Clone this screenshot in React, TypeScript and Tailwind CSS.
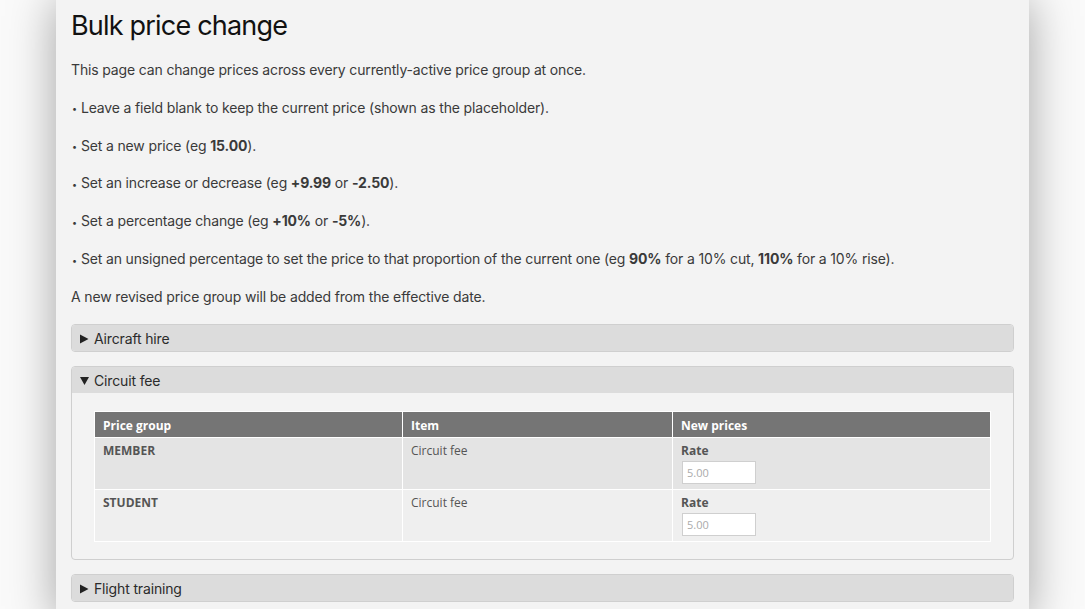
import React from "react";

// Bulk price change page — static recreation of the admin screen

const body = { fontFamily: "Inter, 'Liberation Sans', sans-serif" };
const tableFont = { fontFamily: "'Open Sans', 'DejaVu Sans', sans-serif" };

function Triangle({ open }: { open: boolean }) {
  return (
    <svg width="9" height="10" viewBox="0 0 9 10" className="shrink-0">
      {open ? <path d="M0 1h9L4.5 9z" fill="#222" /> : <path d="M0 0.5v9L8.5 5z" fill="#222" />}
    </svg>
  );
}

function Section({ title, open, children }: { title: string; open?: boolean; children?: React.ReactNode }) {
  return (
    <div className="rounded-[4px] border border-[#cfcfcf] bg-[#f3f3f3] overflow-hidden">
      <div className="flex h-[26px] items-center gap-[5px] bg-[#dcdcdc] pl-[8px] pt-[2px] text-[14px] tracking-[-0.15px] text-[#2b2b2b]">
        <Triangle open={!!open} />
        <span>{title}</span>
      </div>
      {open && <div className="px-[22px] pt-[18px] pb-[17px]">{children}</div>}
    </div>
  );
}

const rows = [
  { group: "MEMBER", item: "Circuit fee", rate: "5.00", bg: "bg-[#e4e4e4]" },
  { group: "STUDENT", item: "Circuit fee", rate: "5.00", bg: "bg-[#efefef]" },
];

function PriceTable() {
  return (
    <table className="w-full border-collapse text-[12px] text-[#555]" style={tableFont}>
      <thead>
        <tr className="bg-[#757575] text-white">
          <th className="w-[308px] border border-white px-[8px] pt-[5px] pb-[2px] text-left font-bold">Price group</th>
          <th className="w-[270px] border border-white px-[8px] pt-[5px] pb-[2px] text-left font-bold">Item</th>
          <th className="border border-white px-[8px] pt-[5px] pb-[2px] text-left font-bold">New prices</th>
        </tr>
      </thead>
      <tbody>
        {rows.map((r) => (
          <tr key={r.group} className={r.bg}>
            <td className="border border-white px-[8px] pt-[5px] pb-[5px] align-top font-bold leading-[16px]">{r.group}</td>
            <td className="border border-white px-[8px] pt-[5px] pb-[5px] align-top leading-[16px]">{r.item}</td>
            <td className="border border-white px-[8px] pt-[5px] pb-[5px] align-top">
              <div className="font-bold leading-[16px]">Rate</div>
              <input
                placeholder={r.rate}
                className="mt-[2px] ml-[1px] block h-[23px] w-[74px] border border-[#cfcfcf] bg-white px-[4px] text-[11px] placeholder:text-[#aaa] outline-none"
                style={tableFont}
              />
            </td>
          </tr>
        ))}
      </tbody>
    </table>
  );
}

function Dot() {
  return <span className="mr-[4px] ml-[1px] inline-block align-middle text-[9px] leading-none">•</span>;
}

export default function App() {
  return (
    <div className="min-h-screen bg-[#fafafa]" style={body}>
      <div className="mx-auto min-h-screen w-[973px] bg-[#f3f3f3] px-[15px] pt-[9px] pb-[20px] shadow-[0_0_45px_rgba(0,0,0,0.35)]">
        <h1 className="text-[27px] leading-[34px] text-[#111] tracking-[-0.8px]">Bulk price change</h1>

        <div className="mt-[16px] flex flex-col gap-[16.8px] text-[14px] leading-[21px] tracking-[-0.15px] text-[#3a3a3a]">
          <p>This page can change prices across every currently-active price group at once.</p>
          <p>
            <Dot />Leave a field blank to keep the current price (shown as the placeholder).
          </p>
          <p>
            <Dot />Set a new price (eg <b>15.00</b>).
          </p>
          <p>
            <Dot />Set an increase or decrease (eg <b>+9.99</b> or <b>-2.50</b>).
          </p>
          <p>
            <Dot />Set a percentage change (eg <b>+10%</b> or <b>-5%</b>).
          </p>
          <p>
            <Dot />Set an unsigned percentage to set the price to that proportion of the current one (eg <b>90%</b> for a
            10% cut, <b>110%</b> for a 10% rise).
          </p>
          <p>A new revised price group will be added from the effective date.</p>
        </div>

        <div className="mt-[17px] flex flex-col gap-[14px]">
          <Section title="Aircraft hire" />
          <Section title="Circuit fee" open>
            <PriceTable />
          </Section>
          <Section title="Flight training" />
        </div>
      </div>
    </div>
  );
}
